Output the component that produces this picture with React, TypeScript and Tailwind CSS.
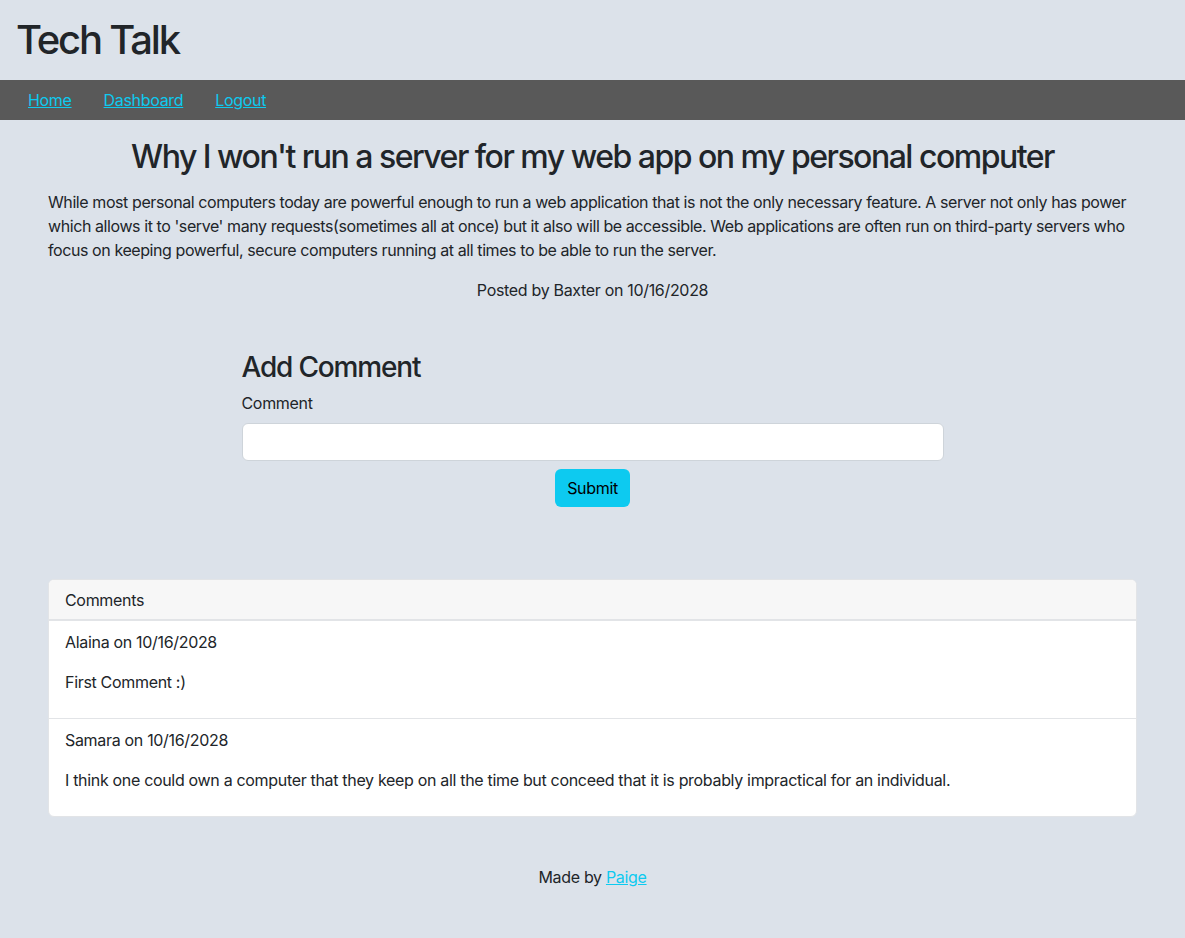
import React from "react";

const comments = [
  { author: "Alaina", date: "10/16/2028", text: "First Comment :)" },
  {
    author: "Samara",
    date: "10/16/2028",
    text: "I think one could own a computer that they keep on all the time but conceed that it is probably impractical for an individual.",
  },
];

export default function App() {
  return (
    <div className="min-h-[938px] bg-[#dce2ea] text-[#212529] font-['Inter','Liberation_Sans',sans-serif] text-base leading-6 tracking-[-0.02em]">
      {/* Header */}
      <header className="px-4 py-4">
        <h1 className="text-[40px] leading-[48px] font-medium tracking-[-0.055em]">Tech Talk</h1>
      </header>

      {/* Nav */}
      <nav className="bg-[#595959] h-10 flex items-center gap-8 px-7">
        <a href="#" className="text-[#0dcaf0] underline">Home</a>
        <a href="#" className="text-[#0dcaf0] underline">Dashboard</a>
        <a href="#" className="text-[#0dcaf0] underline">Logout</a>
      </nav>

      <main className="px-12">
        {/* Post */}
        <section className="pt-[18px]">
          <h2 className="text-[32px] leading-[38px] font-medium text-center mb-[14px] tracking-[-0.047em]">
            Why I won't run a server for my web app on my personal computer
          </h2>
          <p className="mb-4 tracking-[-0.026em]">
            While most personal computers today are powerful enough to run a web application that is not the only necessary feature. A server not only has power which allows it to 'serve' many requests(sometimes all at once) but it also will be accessible. Web applications are often run on third-party servers who focus on keeping powerful, secure computers running at all times to be able to run the server.
          </p>
          <p className="text-center">Posted by Baxter on 10/16/2028</p>
        </section>

        {/* Add comment */}
        <form className="w-[702px] mx-auto mt-12 flex flex-col" onSubmit={(e) => e.preventDefault()}>
          <h3 className="text-[28px] leading-[31px] pt-[2px] font-medium mb-2 tracking-[-0.042em]">Add Comment</h3>
          <label className="mb-2">Comment</label>
          <input
            type="text"
            className="h-[38px] bg-white border border-[#ced4da] rounded-md px-3"
          />
          <button
            type="submit"
            className="self-center mt-2 h-[38px] px-3 bg-[#0dcaf0] text-black rounded-md"
          >
            Submit
          </button>
        </form>

        {/* Comments */}
        <div className="mt-[72px] bg-white border border-[#e2e4e7] rounded-md overflow-hidden">
          <div className="bg-[#f7f7f7] border-b-2 border-[#e2e4e7] px-4 pt-2 pb-[7px]">Comments</div>
          {comments.map((c, i) => (
            <div
              key={i}
              className={i > 0 ? "border-t border-[#e2e4e7] px-4 pt-[9px] pb-2" : "px-4 pt-[9px] pb-2"}
            >
              <p className="mb-4">
                {c.author} on {c.date}
              </p>
              <p className="mb-4">{c.text}</p>
            </div>
          ))}
        </div>

        <footer className="text-center pt-12 pb-12">
          Made by{" "}
          <a href="#" className="text-[#0dcaf0] underline">
            Paige
          </a>
        </footer>
      </main>
    </div>
  );
}
